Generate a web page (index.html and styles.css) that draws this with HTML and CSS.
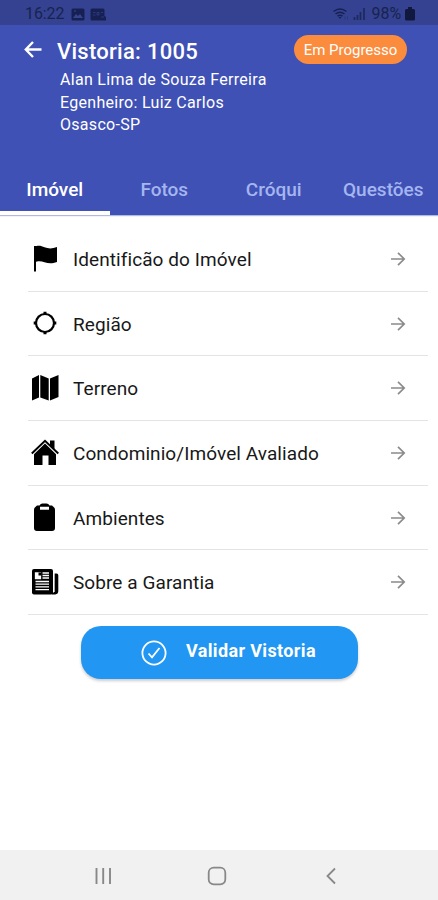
FILE: index.html
```html
<!DOCTYPE html>
<html lang="pt-BR">
<head>
<meta charset="utf-8">
<title>Vistoria: 1005</title>
<link rel="stylesheet" href="styles.css">
</head>
<body>
<div class="screen">
  <div class="status">
    <span class="status-text">16:22</span>
    <svg class="s-pic" width="14" height="13" viewBox="0 0 14 13"><rect x=".5" y=".5" width="13" height="12" rx="1.5" fill="#172052"/><path d="M2 10l3-4 2 2 2-2 3 4z" fill="#354490"/><path d="M3 3h2" stroke="#354490"/></svg>
    <svg class="s-badge" width="16" height="13" viewBox="0 0 16 13"><path d="M2 .5h11q1.500 0 1.500 1.500v6l1.500 1v3.500H2Q.5 12.500.5 11V2Q.5.5 2 .5z" fill="#172052"/><path d="M3 4.500h2.500M3 7h2.500M7 4.500h2v2.500H7zM11 4.500h2M11 9h3" stroke="#2b387c" fill="none"/></svg>
    <span class="grow"></span>
    <svg class="s-wifi" width="16" height="13" viewBox="0 0 16 13"><g fill="none" stroke="#172052" stroke-width="1.500"><path d="M.5 3.500q6.500-5 13 0M2.500 6q4.500-3.500 9 0M4.500 8.200q2.500-2 5 0"/></g><path d="M5.500 9h3L7 11z" fill="#172052"/><path d="M12 8.500v3M14.500 8.500v3" stroke="#2a377d"/></svg>
    <svg class="s-signal" width="13" height="12" viewBox="0 0 13 12"><path d="M1.500 9v3M4.500 7v5M7.500 4v8M11 0v12" stroke="#1d285f" stroke-width="1.700"/></svg>
    <span class="status-text pct">98%</span>
    <svg class="s-batt" width="10" height="14" viewBox="0 0 10 14"><path d="M3 0h4v2h1.500q1.500 0 1.500 1.500V12q0 1.500-1.500 1.500h-7Q0 13.500 0 12V3.500Q0 2 1.500 2H3z" fill="#10183e"/></svg>
  </div>
  <header class="header">
    <div class="title-row">
      <svg class="back" width="18" height="17" viewBox="0 0 18 17"><path d="M9 1L1.800 8.500 9 16M2 8.500h15.500" fill="none" stroke="#fff" stroke-width="2.400"/></svg>
      <h1 class="title">Vistoria: 1005</h1>
      <span class="chip">Em Progresso</span>
    </div>
    <div class="meta">
      <div>Alan Lima de Souza Ferreira</div>
      <div>Egenheiro: Luiz Carlos</div>
      <div>Osasco-SP</div>
    </div>
    <nav class="tabs">
      <div class="tab active">Imóvel</div>
      <div class="tab">Fotos</div>
      <div class="tab">Cróqui</div>
      <div class="tab">Questões</div>
    </nav>
  </header>
  <main class="list">
    <div class="row">
      <svg class="icon" viewBox="0 0 30 30"><path d="M5 2v25.500" stroke="#000" stroke-width="2"/><path d="M4 3.200C8 .8 11 1.800 14.500 3.200S22 5 27 3v15c-5 1.800-8.500 1.500-12.500.2S8 17 4 18.500z"/></svg>
      <span class="label">Identificão do Imóvel</span>
      <svg class="arrow" viewBox="0 0 16 14"><path d="M1 7h13M8 .8L14.200 7 8 13.200"/></svg>
    </div>
    <div class="row">
      <svg class="icon" viewBox="0 0 30 30"><circle cx="15" cy="14" r="9" fill="none" stroke="#000" stroke-width="2.200"/><path d="M15 2.700v3M15 22.300v3M3.700 14h3M23.300 14h3" stroke="#000" stroke-width="3"/></svg>
      <span class="label">Região</span>
      <svg class="arrow" viewBox="0 0 16 14"><path d="M1 7h13M8 .8L14.200 7 8 13.200"/></svg>
    </div>
    <div class="row">
      <svg class="icon" viewBox="0 0 30 30"><path d="M2 5.500L9 2v22.500L2 27.500zM10.300 2l8.400 3.500v22l-8.400-3zM20 5.500L28.500 2v22L20 27.500z"/></svg>
      <span class="label">Terreno</span>
      <svg class="arrow" viewBox="0 0 16 14"><path d="M1 7h13M8 .8L14.200 7 8 13.200"/></svg>
    </div>
    <div class="row">
      <svg class="icon" viewBox="0 0 30 30"><path d="M1.800 15.500L15 2.800l13.300 12.700" fill="none" stroke="#000" stroke-width="2"/><path d="M20 2.500h4.500v9L20 7.500zM15 5.500l11 10.800V27h-7.500v-9.500h-6V27H4V16.300z"/></svg>
      <span class="label">Condominio/Imóvel Avaliado</span>
      <svg class="arrow" viewBox="0 0 16 14"><path d="M1 7h13M8 .8L14.200 7 8 13.200"/></svg>
    </div>
    <div class="row">
      <svg class="icon" viewBox="0 0 30 30"><path fill-rule="evenodd" d="M7 2.500h2.500Q10.500.5 12.500.5h4q2 0 3 2H22q3 2 3 4.500v18q0 3-3 3H7q-3 0-3-3V7q0-2.500 3-4.500zM10 3.800v3h9v-3z"/></svg>
      <span class="label">Ambientes</span>
      <svg class="arrow" viewBox="0 0 16 14"><path d="M1 7h13M8 .8L14.200 7 8 13.200"/></svg>
    </div>
    <div class="row">
      <svg class="icon" viewBox="0 0 30 30"><rect x="2" y="2" width="21" height="25.500" rx="2"/><path d="M21 25.500h3V6.500h2.500q1.800 0 1.800 1.800V24q0 3-3 3.500H22z"/><path d="M24 6v19" stroke="#fff" stroke-width="1.300"/><path d="M5.500 6h5v5.500h-5zM12.500 6H19M12.500 8.500H19M12.500 11H19M5.500 14.500H19M5.500 17.200H19M5.500 19.900H19M5.500 22.600H19" fill="#fff" stroke="#fff" stroke-width="1.300"/><path d="M8.500 5.500h3v3h-3z"/></svg>
      <span class="label">Sobre a Garantia</span>
      <svg class="arrow" viewBox="0 0 16 14"><path d="M1 7h13M8 .8L14.200 7 8 13.200"/></svg>
    </div>
  </main>
  <button class="validate">
    <svg width="26" height="26" viewBox="0 0 26 26"><g fill="none" stroke="#fff" stroke-width="1.800"><circle cx="13" cy="13" r="11.600"/><path d="M7.500 13.500l3.500 3.800 7.500-9.300"/></g></svg>
    <span>Validar Vistoria</span>
  </button>
  <div class="grow"></div>
  <footer class="navbar">
    <svg width="18" height="18" viewBox="0 0 18 18"><path d="M2.500 1v16M9.200 1v16M16 1v16" stroke="#888" stroke-width="1.900"/></svg>
    <svg class="home" width="20" height="20" viewBox="0 0 20 20"><rect x="1.700" y="1.700" width="16.600" height="16.600" rx="5" fill="none" stroke="#888" stroke-width="1.800"/></svg>
    <svg width="12" height="18" viewBox="0 0 12 18"><path d="M10 1.500L2.500 9l7.500 7.500" fill="none" stroke="#888" stroke-width="1.800"/></svg>
  </footer>
</div>
</body>
</html>
```
FILE: styles.css
```css
* { box-sizing: border-box; }
body { margin: 0; background: #fff; font-family: Roboto, sans-serif; }
svg { display: block; flex: none; }
.grow { flex: 1; }
.screen { width: 438px; height: 900px; display: flex; flex-direction: column; overflow: hidden; }

.status { height: 25px; background: #344291; display: flex; align-items: center; padding: 3px 23px 0 25px; flex: none; }
.status-text { font-size: 16px; line-height: 20px; color: #19224f; letter-spacing: -0.1px; }
.s-pic { margin-left: 7px; }
.s-badge { margin-left: 5px; }
.s-signal { margin-left: 4px; }
.pct { margin-left: 6px; }
.s-batt { margin-left: 4px; }

.header { height: 190px; background: #3f51b5; color: #fff; display: flex; flex-direction: column; flex: none; box-shadow: 0 1px 1px rgba(63, 81, 181, .4); }
.title-row { height: 43px; display: flex; padding: 0 31px 0 24px; }
.back { margin-top: 16px; }
.title { margin: 11px 0 0 15px; font-size: 22px; line-height: 32px; font-weight: 500; letter-spacing: .27px; white-space: nowrap; }
.chip { margin: 10px 0 0 auto; width: 113px; height: 29px; border-radius: 15px; background: #fb8c3e; font-size: 15px; line-height: 30px; text-align: center; white-space: nowrap; }
.meta { padding: 1px 0 0 60px; font-size: 16px; line-height: 22.700px; letter-spacing: .3px; height: 97px; }
.tabs { display: grid; grid-template-columns: repeat(4, 1fr); height: 50px; }
.tab { text-align: center; font-size: 19px; line-height: 50px; height: 50px; color: #a5b5ef; white-space: nowrap; font-weight: 500; }
.active { color: #fff; border-bottom: 4px solid #fff; }

.list { padding: 12px 10px 0 28px; flex: none; }
.row { height: 64.700px; display: flex; align-items: center; padding: 0 22px 0 2px; border-bottom: 1.500px solid #e4e4e4; }
.icon { width: 30px; height: 30px; }
.label { flex: 1; margin: 2px 0 0 13px; font-size: 19px; line-height: 26px; letter-spacing: .08px; color: #181818; white-space: nowrap; }
.arrow { width: 16px; height: 14px; fill: none; stroke: #8b8b8b; stroke-width: 1.700; }

.validate { width: 277px; height: 53px; margin: 11px 0 0 81px; padding: 0 40px 0 60px; border: 0; border-radius: 20px; background: #2196f3; color: #fff; display: flex; align-items: center; flex: none; font: 700 18px/24px Roboto, sans-serif; letter-spacing: .36px; box-shadow: 0 2px 3px rgba(0, 0, 0, .2); white-space: nowrap; }
.validate span { margin: -4px 0 0 19px; }

.navbar { height: 50px; background: #f1f1f1; display: flex; align-items: center; padding: 2px 101px 0 94px; justify-content: space-between; flex: none; }
.home { margin-right: 3px; }
```
